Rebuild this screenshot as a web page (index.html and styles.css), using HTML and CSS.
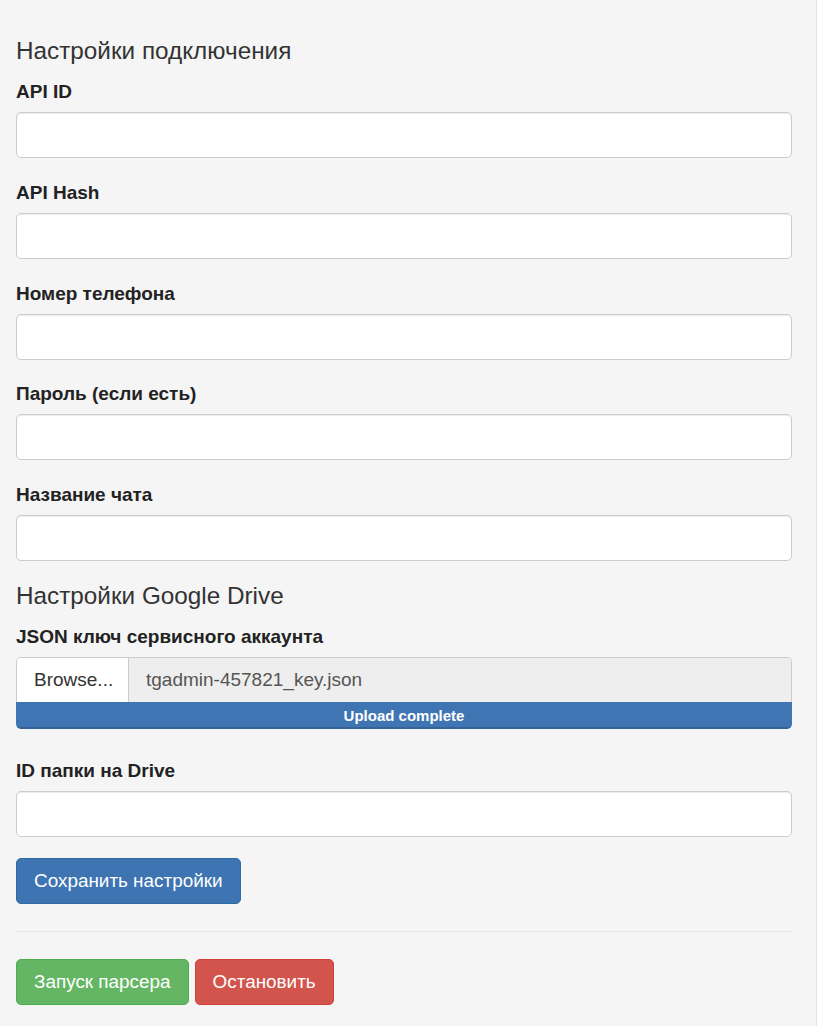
FILE: index.html
```html
<!DOCTYPE html>
<html lang="ru">
<head>
<meta charset="utf-8">
<title>Настройки</title>
<link rel="stylesheet" href="styles.css">
</head>
<body>
<div class="well">
  <h4 class="section-title">Настройки подключения</h4>

  <div class="form-group">
    <label class="control-label" for="api_id">API ID</label>
    <input class="form-control" id="api_id" type="text">
  </div>
  <div class="form-group">
    <label class="control-label" for="api_hash">API Hash</label>
    <input class="form-control" id="api_hash" type="text">
  </div>
  <div class="form-group">
    <label class="control-label" for="phone">Номер телефона</label>
    <input class="form-control" id="phone" type="text">
  </div>
  <div class="form-group">
    <label class="control-label" for="password">Пароль (если есть)</label>
    <input class="form-control" id="password" type="text">
  </div>
  <div class="form-group">
    <label class="control-label" for="chat">Название чата</label>
    <input class="form-control" id="chat" type="text">
  </div>

  <h4 class="section-title second">Настройки Google Drive</h4>

  <div class="form-group file-group">
    <label class="control-label">JSON ключ сервисного аккаунта</label>
    <div class="input-group">
      <span class="browse">Browse...</span>
      <span class="file-name">tgadmin-457821_key.json</span>
    </div>
    <div class="progress"><div class="progress-bar">Upload complete</div></div>
  </div>

  <div class="form-group">
    <label class="control-label" for="folder">ID папки на Drive</label>
    <input class="form-control" id="folder" type="text">
  </div>

  <div class="btn-row">
    <button class="btn btn-primary btn-save">Сохранить настройки</button>
  </div>

  <hr class="divider">

  <div class="btn-row">
    <button class="btn btn-success">Запуск парсера</button>
    <button class="btn btn-danger">Остановить</button>
  </div>
</div>
</body>
</html>
```

FILE: styles.css
```css
html {
  background: #ffffff;
}

body {
  margin: 0;
  font-family: "Liberation Sans", Arial, Helvetica, sans-serif;
  color: #333333;
}

.well {
  box-sizing: border-box;
  width: 817px;
  min-height: 1026px;
  padding: 37px 24px 0 16px;
  background: #f5f5f5;
  border-right: 1px solid #e3e3e3;
}

.section-title {
  margin: 0 0 14px;
  font-size: 24.3px;
  line-height: 27px;
  font-weight: normal;
  color: #333333;
}

.section-title.second {
  margin-bottom: 14.5px;
}

.form-group {
  margin-bottom: 20.75px;
}

.control-label {
  display: block;
  margin-bottom: 7px;
  font-size: 19px;
  line-height: 27px;
  font-weight: bold;
  color: #222222;
}

.form-control {
  display: block;
  box-sizing: border-box;
  width: 100%;
  height: 46px;
  margin: 0;
  padding: 8px 16px;
  border: 1px solid #cccccc;
  border-radius: 5px;
  background: #ffffff;
  box-shadow: inset 0 1px 1px rgba(0, 0, 0, 0.075);
  font-family: inherit;
  font-size: 19px;
}

.file-group {
  margin-bottom: 28px;
}

.input-group {
  display: flex;
  box-sizing: border-box;
  height: 45px;
  border: 1px solid #cccccc;
  border-bottom: 0;
  border-radius: 5px 5px 0 0;
  overflow: hidden;
}

.browse {
  box-sizing: border-box;
  width: 112px;
  padding-left: 17px;
  background: #ffffff;
  border-right: 1px solid #cccccc;
  font-size: 19px;
  line-height: 44px;
  color: #333333;
}

.file-name {
  flex: 1;
  padding-left: 17px;
  background: #eeeeee;
  font-size: 19px;
  line-height: 44px;
  color: #555555;
}

.progress {
  height: 27px;
  border-radius: 0 0 5px 5px;
  background: #e8e8e8;
  overflow: hidden;
}

.progress-bar {
  height: 27px;
  background: #3f75b3;
  box-shadow: inset 0 -2px 0 rgba(0, 0, 0, 0.15);
  color: #ffffff;
  font-size: 15px;
  line-height: 27px;
  font-weight: bold;
  text-align: center;
}

.btn-row {
  display: flex;
  gap: 6px;
}

.btn {
  box-sizing: border-box;
  height: 46px;
  padding: 0 17px;
  border: 1px solid transparent;
  border-radius: 5px;
  font-family: inherit;
  font-size: 18.9px;
  line-height: 44px;
  color: #ffffff;
  cursor: pointer;
}

.btn-primary {
  background: #3e74b2;
  border-color: #2e6da4;
}

.btn-success {
  background: #65b664;
  border-color: #4cae4c;
}

.btn-danger {
  background: #d2544d;
  border-color: #d43f3a;
}

.divider {
  margin: 27px 0;
  height: 0;
  border: 0;
  border-top: 1px solid #e6e6e6;
}
```
